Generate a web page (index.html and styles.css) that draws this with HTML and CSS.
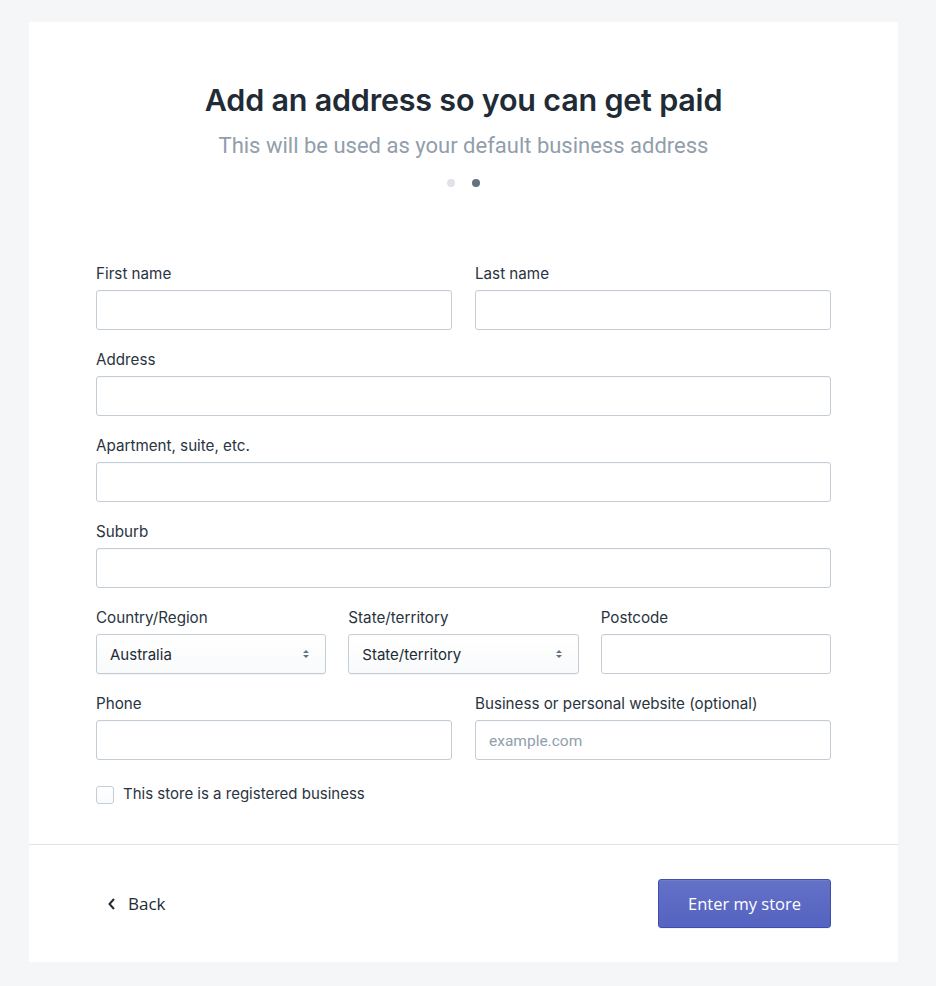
FILE: index.html
```html
<!DOCTYPE html>
<html lang="en">
  <head>
    <meta charset="UTF-8" />
    <meta name="viewport" content="width=device-width, initial-scale=1.0" />
    <title>Add an address</title>
    <link rel="stylesheet" href="styles.css">
  </head>
  <body>
    <div class="card">
      <form class="card-body">
        <h1>Add an address so you can get paid</h1>
        <p class="subtitle">This will be used as your default business address</p>
        <div class="dots">
          <span class="dot"></span>
          <span class="dot active"></span>
        </div>

        <div class="fields">
          <div class="row two">
            <label class="field">
              <span>First name</span>
              <input type="text" />
            </label>
            <label class="field">
              <span>Last name</span>
              <input type="text" />
            </label>
          </div>
          <label class="field">
            <span>Address</span>
            <input type="text" />
          </label>
          <label class="field">
            <span>Apartment, suite, etc.</span>
            <input type="text" />
          </label>
          <label class="field">
            <span>Suburb</span>
            <input type="text" />
          </label>
          <div class="row three">
            <label class="field">
              <span>Country/Region</span>
              <div class="select">
                <select>
                  <option>Australia</option>
                </select>
                <svg class="arrows" width="8" height="12" viewBox="0 0 8 12"><path d="M1 5 L4 2 L7 5 Z M1 7 L4 10 L7 7 Z" fill="#637381"/></svg>
              </div>
            </label>
            <label class="field">
              <span>State/territory</span>
              <div class="select">
                <select>
                  <option>State/territory</option>
                </select>
                <svg class="arrows" width="8" height="12" viewBox="0 0 8 12"><path d="M1 5 L4 2 L7 5 Z M1 7 L4 10 L7 7 Z" fill="#637381"/></svg>
              </div>
            </label>
            <label class="field">
              <span>Postcode</span>
              <input type="text" />
            </label>
          </div>
          <div class="row two">
            <label class="field">
              <span>Phone</span>
              <input type="text" />
            </label>
            <label class="field">
              <span>Business or personal website (optional)</span>
              <input type="text" placeholder="example.com" />
            </label>
          </div>
          <label class="check">
            <input type="checkbox" />
            <span>This store is a registered business</span>
          </label>
        </div>
      </form>

      <div class="card-footer">
        <a class="back" href="#">
          <svg width="10" height="14" viewBox="0 0 10 14"><path d="M7 2 L2.5 7 L7 12" fill="none" stroke="#212b36" stroke-width="2"/></svg>
          Back
        </a>
        <button class="primary" type="button">Enter my store</button>
      </div>
    </div>
  </body>
</html>
```

FILE: styles.css
```css
body {
  margin: 0;
  background: #f4f6f8;
  font-family: Inter, "Noto Sans", sans-serif;
  color: #212b36;
}
.card {
  width: 869px;
  margin: 22px 0 0 29px;
  background: white;
}
.card-body {
  padding: 60px 67px 40px;
  border-bottom: 1px solid #dfe3e8;
}
h1 {
  margin: 0;
  font-size: 30.5px;
  line-height: 36px;
  font-weight: 600;
  text-align: center;
  letter-spacing: -0.2px;
  color: #212b36;
}
.subtitle {
  margin: 16px 0 0;
  font-family: Roboto, sans-serif;
  font-size: 22px;
  line-height: 24px;
  text-align: center;
  color: #919eab;
}
.dots {
  display: flex;
  justify-content: center;
  gap: 17px;
  margin-top: 21px;
}
.dot {
  width: 8px;
  height: 8px;
  border-radius: 50%;
  background: #dfe3e8;
}
.dot.active {
  background: #637381;
}
.fields {
  display: flex;
  flex-direction: column;
  gap: 19px;
  margin-top: 76px;
}
.row {
  display: grid;
  gap: 23px;
}
.row.two {
  grid-template-columns: 1fr 1fr;
}
.row.three {
  grid-template-columns: 1fr 1fr 1fr;
  gap: 22px;
}
.field {
  display: flex;
  flex-direction: column;
  gap: 7px;
}
.field > span {
  font-size: 15.2px;
  line-height: 20px;
  color: #2a3440;
  position: relative;
  top: 1px;
}
input[type="text"],
select {
  box-sizing: border-box;
  width: 100%;
  height: 40px;
  margin: 0;
  padding: 0 13px;
  border: 1px solid #c4cdd5;
  border-radius: 3px;
  font-family: Inter, sans-serif;
  font-size: 15px;
  color: #212b36;
  background: white;
  box-shadow: inset 0 1px 0 rgba(99, 115, 129, 0.05);
}
input::placeholder {
  font-family: Roboto, sans-serif;
  font-size: 15.5px;
  color: #919eab;
}
.select {
  position: relative;
}
select {
  appearance: none;
  background: linear-gradient(#fff, #f9fafb);
  box-shadow: 0 1px 0 rgba(22, 29, 37, 0.05);
}
.arrows {
  position: absolute;
  right: 16px;
  top: 14px;
  pointer-events: none;
}
.check {
  display: flex;
  align-items: center;
  gap: 9px;
  margin-top: 7px;
  font-size: 15px;
  line-height: 18px;
  color: #2a3440;
}
.check span {
  position: relative;
  top: -1px;
}
.check input {
  appearance: none;
  width: 18px;
  height: 18px;
  margin: 0;
  border: 1px solid #c4cdd5;
  border-radius: 3px;
  background: linear-gradient(#fff, #f9fafb);
}
.card-footer {
  display: flex;
  justify-content: space-between;
  align-items: center;
  padding: 34px 67px;
}
.back {
  display: flex;
  align-items: center;
  gap: 11px;
  margin-left: 11px;
  font-family: "Open Sans", sans-serif;
  font-size: 17px;
  color: #212b36;
  text-decoration: none;
}
.primary {
  width: 173px;
  height: 49px;
  border: 1px solid #3f4eae;
  border-radius: 3px;
  background: linear-gradient(#6371c7, #5563c1);
  box-shadow: inset 0 1px 0 #6f7bcb, 0 1px 0 rgba(22, 29, 37, 0.05);
  font-family: "Open Sans", sans-serif;
  font-size: 16.5px;
  color: white;
  cursor: pointer;
}
```
